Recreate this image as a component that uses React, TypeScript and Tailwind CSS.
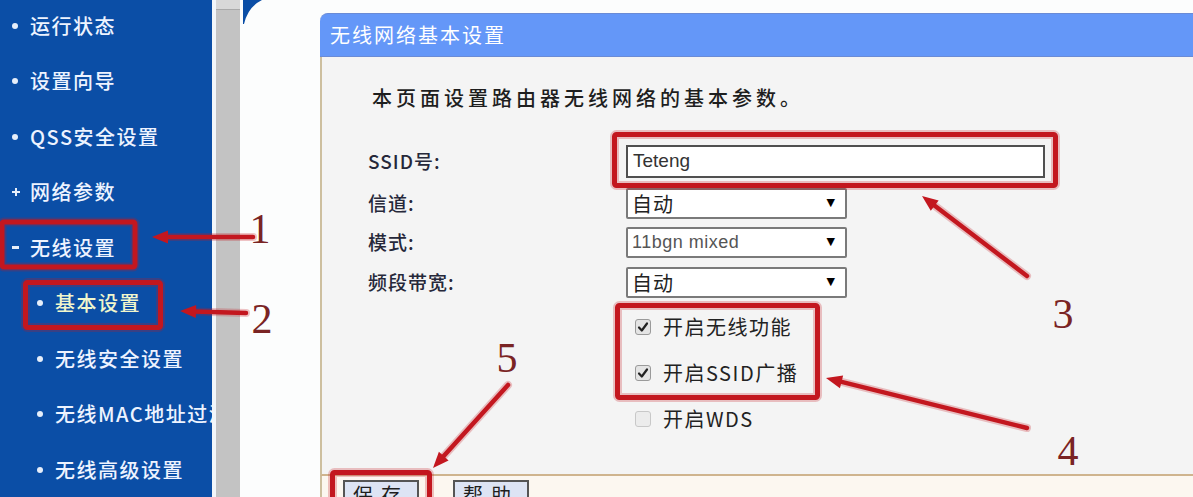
import React from "react";

const CJK = "font-['Noto_Sans_CJK_SC','Liberation_Sans',sans-serif]";

type Item = { t: string; lvl: 0 | 1; b: "dot" | "plus" | "minus"; active?: boolean };

const items: Item[] = [
  { t: "运行状态", lvl: 0, b: "dot" },
  { t: "设置向导", lvl: 0, b: "dot" },
  { t: "QSS安全设置", lvl: 0, b: "dot" },
  { t: "网络参数", lvl: 0, b: "plus" },
  { t: "无线设置", lvl: 0, b: "minus" },
  { t: "基本设置", lvl: 1, b: "dot", active: true },
  { t: "无线安全设置", lvl: 1, b: "dot" },
  { t: "无线MAC地址过滤", lvl: 1, b: "dot" },
  { t: "无线高级设置", lvl: 1, b: "dot" },
];

function Bullet({ b }: { b: Item["b"] }) {
  if (b === "plus")
    return (
      <div className="relative w-[8px] h-[8px]">
        <div className="absolute left-0 top-[3px] w-[8px] h-[2px] bg-[#e6eefa]" />
        <div className="absolute left-[3px] top-0 w-[2px] h-[8px] bg-[#e6eefa]" />
      </div>
    );
  if (b === "minus") return <div className="w-[7px] h-[3px] bg-[#e6eefa]" />;
  return <div className="w-[6px] h-[6px] rounded-full bg-[#e6eefa]" />;
}

function Sidebar() {
  return (
    <div className={`w-[212px] shrink-0 bg-[#0b4ea6] overflow-hidden ${CJK}`}>
      <div className="-mt-[2px] flex flex-col">
        {items.map((it) => (
          <div
            key={it.t}
            className={`flex items-center h-[55.5px] whitespace-nowrap ${it.lvl === 0 ? "pl-[12px]" : "pl-[37px]"}`}
          >
            <div className="w-[18px] shrink-0 flex items-center">
              <Bullet b={it.b} />
            </div>
            <span
              className={`shrink-0 text-[20px] font-medium tracking-[1.5px] leading-none ${it.active ? "text-[#f0f6cc]" : "text-[#edf3ff]"}`}
            >
              {it.t}
            </span>
          </div>
        ))}
      </div>
    </div>
  );
}

function Select({ value, latin }: { value: string; latin?: boolean }) {
  return (
    <div className="w-[221px] h-[31px] border-2 border-[#7a7a7a] rounded-[2px] bg-white flex items-center justify-between pl-[4px] pr-[10px]">
      <span
        className={
          latin
            ? "font-['Liberation_Sans',sans-serif] text-[18px] text-[#555] tracking-[0.5px]"
            : `${CJK} text-[20px] text-[#222] tracking-[1px]`
        }
      >
        {value}
      </span>
      <span className="text-[11px] text-black font-['DejaVu_Sans',sans-serif]">▼</span>
    </div>
  );
}

function Check({ checked, label }: { checked: boolean; label: string }) {
  return (
    <div className="h-[46px] flex items-center pl-[9px]">
      <div
        className={`w-[16px] h-[16px] rounded-[3px] border flex items-center justify-center ${checked ? "border-[#9a9a9a] bg-[#e4e4e4]" : "border-[#c8c8c8] bg-[#ececec]"}`}
      >
        {checked && (
          <svg width="12" height="12" viewBox="0 0 12 12">
            <path d="M2 6.5 L4.8 9.5 L10 2.5" fill="none" stroke="#222" strokeWidth="2.2" strokeLinecap="round" strokeLinejoin="round" />
          </svg>
        )}
      </div>
      <span className={`ml-[12px] text-[20px] tracking-[1.5px] text-[#222] ${CJK}`}>{label}</span>
    </div>
  );
}

function Panel() {
  return (
    <div className="flex flex-col h-full">
      <div className="h-[44px] shrink-0 rounded-tl-[8px] bg-[#6497f8] border-t border-b border-[#6a8bd6] flex items-center pl-[10px]">
        <span className={`text-[20px] tracking-[2px] text-white ${CJK}`}>无线网络基本设置</span>
      </div>
      <div className="h-[419px] shrink-0 border-l-2 border-[#cdbf9f] bg-[#f4f4f4] pl-[46px] pt-[29px] border-b-2 border-b-[#cfb48e]">
        <div className={`pl-[4px] h-[24px] leading-[24px] text-[20px] font-medium tracking-[4px] text-[#1e1e1e] ${CJK}`}>
          本页面设置路由器无线网络的基本参数。
        </div>
        <div className="mt-[35px] grid grid-cols-[258px_1fr]">
          <div className={`flex flex-col text-[19px] font-medium tracking-[1px] text-[#26283a] ${CJK}`}>
            <div className="h-[33px] flex items-center">SSID号:</div>
            <div className="mt-[10px] h-[31px] flex items-center">信道:</div>
            <div className="mt-[8px] h-[31px] flex items-center">模式:</div>
            <div className="mt-[9px] h-[31px] flex items-center">频段带宽:</div>
          </div>
          <div className="flex flex-col">
            <div className="w-[419px] h-[33px] border-2 border-[#505050] bg-white flex items-center pl-[5px]">
              <span className="font-['Liberation_Sans',sans-serif] text-[19px] text-[#333]">Teteng</span>
            </div>
            <div className="mt-[10px]">
              <Select value="自动" />
            </div>
            <div className="mt-[8px]">
              <Select value="11bgn mixed" latin />
            </div>
            <div className="mt-[9px]">
              <Select value="自动" />
            </div>
            <div className="mt-[6px] flex flex-col">
              <Check checked label="开启无线功能" />
              <Check checked label="开启SSID广播" />
              <Check checked={false} label="开启WDS" />
            </div>
          </div>
        </div>
      </div>
      <div className="flex-1 border-l-2 border-[#cdbf9f] bg-[#fcf7f0] pl-[21px] pt-[4px] flex gap-[34px]">
        <div className={`w-[76px] h-[30px] border-2 border-[#555] bg-[#dde4f4] flex items-center justify-center text-[20px] tracking-[8px] text-[#1e1e1e] ${CJK}`}>
          保存
        </div>
        <div className={`w-[76px] h-[30px] border-2 border-[#555] bg-[#dde4f4] flex items-center justify-center text-[20px] tracking-[8px] text-[#1e1e1e] ${CJK}`}>
          帮助
        </div>
      </div>
    </div>
  );
}

const RED = "#c3171f";

function Arrow({ x1, y1, x2, y2 }: { x1: number; y1: number; x2: number; y2: number }) {
  const dx = x2 - x1;
  const dy = y2 - y1;
  const len = Math.hypot(dx, dy);
  const ux = dx / len;
  const uy = dy / len;
  const hl = 16;
  const hw = 6.5;
  const bx = x2 - ux * hl;
  const by = y2 - uy * hl;
  const px = -uy;
  const py = ux;
  const pts = `${x2},${y2} ${bx + px * hw},${by + py * hw} ${bx - px * hw},${by - py * hw}`;
  return (
    <g>
      <line x1={x1} y1={y1} x2={bx + ux * 2} y2={by + uy * 2} stroke={RED} strokeOpacity="0.25" strokeWidth="8" strokeLinecap="round" />
      <line x1={x1} y1={y1} x2={bx + ux * 2} y2={by + uy * 2} stroke={RED} strokeWidth="4.5" strokeLinecap="round" />
      <polygon points={pts} fill={RED} />
    </g>
  );
}

function Box({ x, y, w, h }: { x: number; y: number; w: number; h: number }) {
  return (
    <g>
      <rect x={x} y={y} width={w} height={h} fill="none" stroke={RED} strokeOpacity="0.25" strokeWidth="9" rx="2" />
      <rect x={x} y={y} width={w} height={h} fill="none" stroke={RED} strokeWidth="5" rx="2" />
    </g>
  );
}

function Num({ x, y, t }: { x: number; y: number; t: string }) {
  return (
    <text x={x} y={y} textAnchor="middle" fontFamily="'Liberation Serif', serif" fontSize="42" fill="#7a2424">
      {t}
    </text>
  );
}

function Annotations() {
  return (
    <svg className="absolute inset-0 pointer-events-none" width="1193" height="497" viewBox="0 0 1193 497">
      <Box x={2} y={222} w={133} h={45} />
      <Box x={25.5} y={282.5} w={135} h={45} />
      <Box x={614.5} y={134.5} w={441} h={51} />
      <Box x={617.5} y={305.5} w={200} h={92} />
      <Box x={332.5} y={472.5} w={97} h={40} />
      <Arrow x1={253} y1={237} x2={152} y2={237} />
      <Arrow x1={246} y1={313} x2={180} y2={311} />
      <Arrow x1={1027} y1={276} x2={922} y2={196} />
      <Arrow x1={1027} y1={428} x2={826} y2={378} />
      <Arrow x1={508} y1={385} x2={433} y2={468} />
      <Num x={260} y={243} t="1" />
      <Num x={262} y={333} t="2" />
      <Num x={1063} y={328} t="3" />
      <Num x={1068} y={465} t="4" />
      <Num x={507} y={372} t="5" />
    </svg>
  );
}

export default function App() {
  return (
    <div className="relative w-[1193px] h-[497px] overflow-hidden bg-[#fcfdfd] flex">
      <Sidebar />
      <div className="w-[4px] shrink-0 bg-[#f2f6fa]" />
      <div className="w-[24px] shrink-0 bg-[#c3c3c3] flex flex-col">
        <div className="h-[10px] bg-[#d8d8d8] border-b border-[#a9a9a9]" />
      </div>
      <div className="relative flex-1 pl-[80px] pt-[13px] flex flex-col">
        <svg className="absolute left-[3px] top-0" width="20" height="24" viewBox="0 0 20 24">
          <path d="M0 0 H19 Q5 7 1 24 H0 Z" fill="#0b4ea6" />
        </svg>
        <Panel />
      </div>
      <Annotations />
    </div>
  );
}
